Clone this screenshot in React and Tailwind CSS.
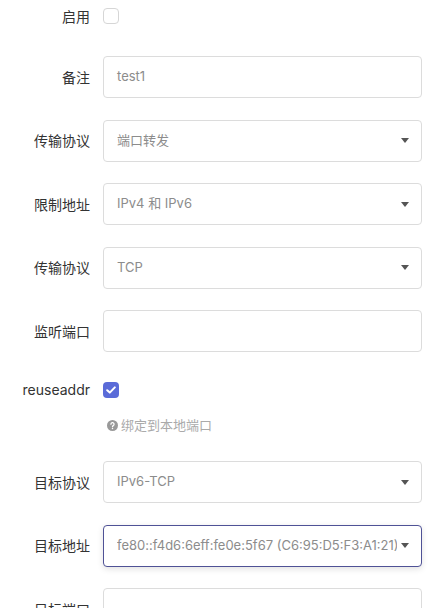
import React from "react";

const font = { fontFamily: '"Inter", "Noto Sans CJK SC", sans-serif' };

const Caret = () => (
  <svg width="8" height="5" viewBox="0 0 8 5" className="shrink-0">
    <path d="M0 0h8L4 5z" fill="#555" />
  </svg>
);

const Row = ({ label, children, className = "" }) => (
  <div className={`flex items-center ${className}`}>
    <div className="w-[90px] shrink-0 text-right text-[14px] text-[#333]">{label}</div>
    <div className="ml-[13px] w-[319px]">{children}</div>
  </div>
);

const TextBox = ({ value }) => (
  <div className="h-[42px] rounded-[4px] border border-[#dcdcdc] bg-white px-[13px] flex items-center text-[13px] text-[#8c8c8c]">
    {value}
  </div>
);

const SelectBox = ({ value, focused }) => (
  <div
    className={`h-[42px] rounded-[4px] border bg-white pl-[13px] pr-[12px] flex items-center justify-between gap-[4px] text-[13px] text-[#8c8c8c] ${
      focused
        ? "border-[#4f5296] shadow-[0_2px_6px_rgba(0,0,0,0.12)]"
        : "border-[#dcdcdc]"
    }`}
  >
    <span className="whitespace-nowrap overflow-hidden min-w-0">{value}</span>
    <Caret />
  </div>
);

const App = () => {
  return (
    <div className="w-[445px] h-[608px] overflow-hidden bg-white" style={font}>
      <Row label="启用" className="h-[32px] mb-[24px]">
        <div className="w-[16px] h-[16px] rounded-[4px] border border-[#d6d6d6] bg-white" />
      </Row>
      <Row label="备注" className="h-[42px] mb-[21.5px]">
        <TextBox value="test1" />
      </Row>
      <Row label="传输协议" className="h-[42px] mb-[21.5px]">
        <SelectBox value="端口转发" />
      </Row>
      <Row label="限制地址" className="h-[42px] mb-[21.5px]">
        <SelectBox value="IPv4 和 IPv6" />
      </Row>
      <Row label="传输协议" className="h-[42px] mb-[21.5px]">
        <SelectBox value="TCP" />
      </Row>
      <Row label="监听端口" className="h-[42px] mb-[21.5px]">
        <TextBox value="" />
      </Row>
      <Row label="reuseaddr" className="h-[32px]">
        <div className="w-[16px] h-[16px] rounded-[4px] bg-[#5a6bd8] flex items-center justify-center">
          <svg width="10" height="8" viewBox="0 0 10 8">
            <path d="M1.2 4.2l2.6 2.4L8.8 1.4" fill="none" stroke="#fff" strokeWidth="2" strokeLinecap="round" strokeLinejoin="round" />
          </svg>
        </div>
      </Row>
      <div className="mt-[10px] mb-[25.5px] h-[20px] flex items-center pl-[107px] gap-[3px] text-[13px] text-[#aaa]">
        <svg width="11" height="11" viewBox="0 0 12 12">
          <circle cx="6" cy="6" r="6" fill="#999" />
          <path d="M4.3 4.6a1.7 1.7 0 1 1 2.5 1.5c-.5.3-.8.6-.8 1.2" fill="none" stroke="#fff" strokeWidth="1.4" strokeLinecap="round" />
          <circle cx="6" cy="9.2" r="0.8" fill="#fff" />
        </svg>
        <span>绑定到本地端口</span>
      </div>
      <Row label="目标协议" className="h-[42px] mb-[21.5px]">
        <SelectBox value="IPv6-TCP" />
      </Row>
      <Row label="目标地址" className="h-[42px] mb-[21.5px]">
        <SelectBox value="fe80::f4d6:6eff:fe0e:5f67 (C6:95:D5:F3:A1:21)" focused />
      </Row>
      <Row label="目标端口" className="h-[42px]">
        <TextBox value="" />
      </Row>
    </div>
  );
};

export default App;
